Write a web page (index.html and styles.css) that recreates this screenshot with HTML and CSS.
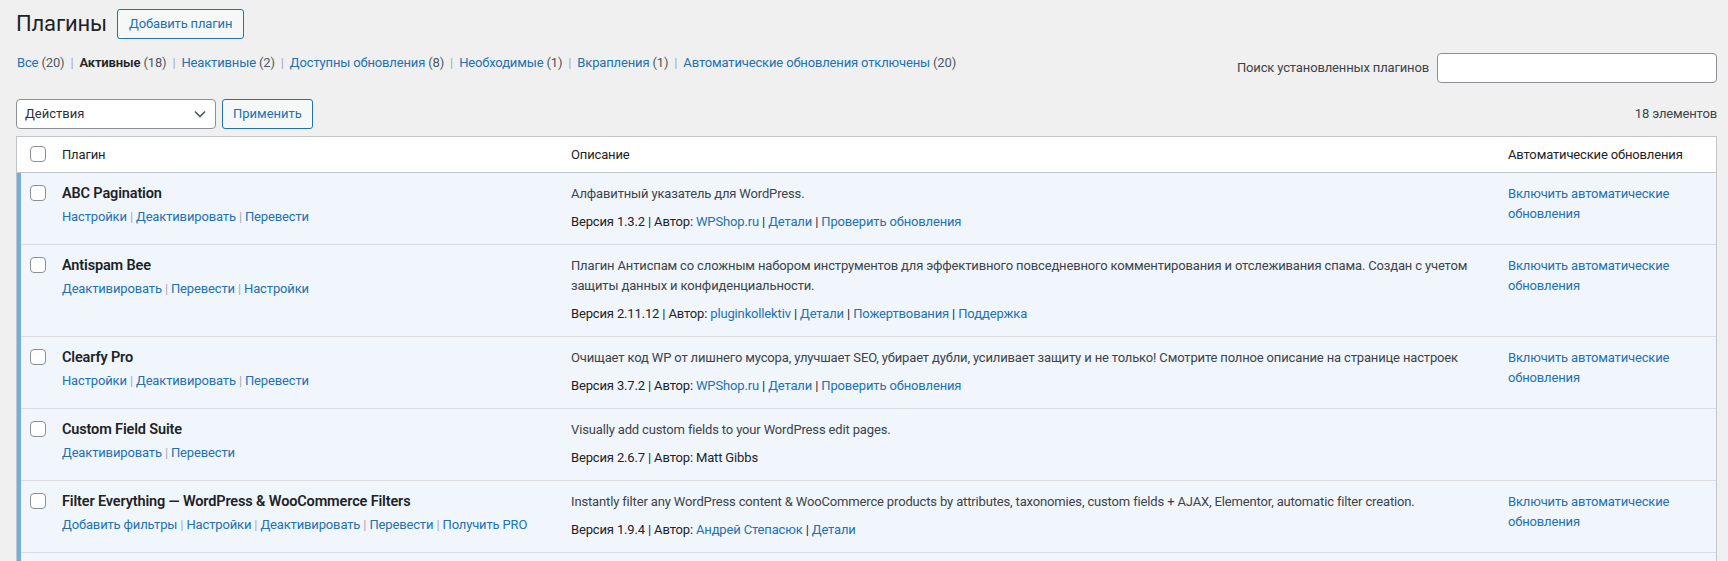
FILE: index.html
```html
<!DOCTYPE html>
<html lang="ru">

<head>
    <meta charset="UTF-8">
    <title>Плагины</title>
    <link rel="stylesheet" href="styles.css">
</head>

<body>
    <div class="wrap">
        <!-- page title -->
        <div class="title-row">
            <h1>Плагины</h1>
            <a href="#" class="page-title-action">Добавить плагин</a>
        </div>

        <!-- filters + search -->
        <div class="filter-row">
            <ul class="subsubsub">
                <li><a href="#">Все <span class="count">(20)</span></a><span class="sep">|</span></li>
                <li><a href="#" class="current">Активные <span class="count">(18)</span></a><span class="sep">|</span></li>
                <li><a href="#">Неактивные <span class="count">(2)</span></a><span class="sep">|</span></li>
                <li><a href="#">Доступны обновления <span class="count">(8)</span></a><span class="sep">|</span></li>
                <li><a href="#">Необходимые <span class="count">(1)</span></a><span class="sep">|</span></li>
                <li><a href="#">Вкрапления <span class="count">(1)</span></a><span class="sep">|</span></li>
                <li><a href="#">Автоматические обновления отключены <span class="count">(20)</span></a></li>
            </ul>
            <form class="search-box">
                <label for="plugin-search">Поиск установленных плагинов</label>
                <input type="search" id="plugin-search">
            </form>
        </div>

        <!-- bulk actions -->
        <div class="tablenav">
            <span class="select">
                <select>
                    <option>Действия</option>
                </select>
                <svg width="12" height="8" viewBox="0 0 12 8"><path d="M1 1.5 6 6.5 11 1.5" fill="none" stroke="#50575e" stroke-width="1.6"/></svg>
            </span>
            <button class="button">Применить</button>
            <span class="displaying-num">18 элементов</span>
        </div>

        <table class="plugins">
            <colgroup>
                <col class="col-check">
                <col class="col-name">
                <col class="col-desc">
                <col class="col-auto">
            </colgroup>
            <thead>
                <tr>
                    <th class="check-column"><input type="checkbox"></th>
                    <th>Плагин</th>
                    <th>Описание</th>
                    <th>Автоматические обновления</th>
                </tr>
            </thead>
            <tbody>
                <tr>
                    <th class="check-column"><input type="checkbox"></th>
                    <td>
                        <strong class="plugin-name">ABC Pagination</strong>
                        <div class="row-actions">
                            <a href="#">Настройки</a> <span class="sep">|</span> <a href="#">Деактивировать</a> <span class="sep">|</span> <a href="#">Перевести</a>
                        </div>
                    </td>
                    <td>
                        <p class="desc">Алфавитный указатель для WordPress.</p>
                        <div class="version">Версия 1.3.2 | Автор: <a href="#">WPShop.ru</a> | <a href="#">Детали</a> | <a href="#">Проверить обновления</a></div>
                    </td>
                    <td><a href="#">Включить автоматические обновления</a></td>
                </tr>
                <tr>
                    <th class="check-column"><input type="checkbox"></th>
                    <td>
                        <strong class="plugin-name">Antispam Bee</strong>
                        <div class="row-actions">
                            <a href="#">Деактивировать</a> <span class="sep">|</span> <a href="#">Перевести</a> <span class="sep">|</span> <a href="#">Настройки</a>
                        </div>
                    </td>
                    <td>
                        <p class="desc">Плагин Антиспам со сложным набором инструментов для эффективного повседневного комментирования и отслеживания спама. Создан с учетом защиты данных и конфиденциальности.</p>
                        <div class="version">Версия 2.11.12 | Автор: <a href="#">pluginkollektiv</a> | <a href="#">Детали</a> | <a href="#">Пожертвования</a> | <a href="#">Поддержка</a></div>
                    </td>
                    <td><a href="#">Включить автоматические обновления</a></td>
                </tr>
                <tr>
                    <th class="check-column"><input type="checkbox"></th>
                    <td>
                        <strong class="plugin-name">Clearfy Pro</strong>
                        <div class="row-actions">
                            <a href="#">Настройки</a> <span class="sep">|</span> <a href="#">Деактивировать</a> <span class="sep">|</span> <a href="#">Перевести</a>
                        </div>
                    </td>
                    <td>
                        <p class="desc">Очищает код WP от лишнего мусора, улучшает SEO, убирает дубли, усиливает защиту и не только! Смотрите полное описание на странице настроек</p>
                        <div class="version">Версия 3.7.2 | Автор: <a href="#">WPShop.ru</a> | <a href="#">Детали</a> | <a href="#">Проверить обновления</a></div>
                    </td>
                    <td><a href="#">Включить автоматические обновления</a></td>
                </tr>
                <tr>
                    <th class="check-column"><input type="checkbox"></th>
                    <td>
                        <strong class="plugin-name">Custom Field Suite</strong>
                        <div class="row-actions">
                            <a href="#">Деактивировать</a> <span class="sep">|</span> <a href="#">Перевести</a>
                        </div>
                    </td>
                    <td>
                        <p class="desc">Visually add custom fields to your WordPress edit pages.</p>
                        <div class="version">Версия 2.6.7 | Автор: Matt Gibbs</div>
                    </td>
                    <td></td>
                </tr>
                <tr>
                    <th class="check-column"><input type="checkbox"></th>
                    <td>
                        <strong class="plugin-name">Filter Everything — WordPress &amp; WooCommerce Filters</strong>
                        <div class="row-actions">
                            <a href="#">Добавить фильтры</a> <span class="sep">|</span> <a href="#">Настройки</a> <span class="sep">|</span> <a href="#">Деактивировать</a> <span class="sep">|</span> <a href="#">Перевести</a> <span class="sep">|</span> <a href="#">Получить PRO</a>
                        </div>
                    </td>
                    <td>
                        <p class="desc">Instantly filter any WordPress content &amp; WooCommerce products by attributes, taxonomies, custom fields + AJAX, Elementor, automatic filter creation.</p>
                        <div class="version">Версия 1.9.4 | Автор: <a href="#">Андрей Степасюк</a> | <a href="#">Детали</a></div>
                    </td>
                    <td><a href="#">Включить автоматические обновления</a></td>
                </tr>
                <tr>
                    <th class="check-column"><input type="checkbox"></th>
                    <td>
                        <strong class="plugin-name">Flamingo</strong>
                        <div class="row-actions">
                            <a href="#">Деактивировать</a> <span class="sep">|</span> <a href="#">Перевести</a>
                        </div>
                    </td>
                    <td>
                        <p class="desc">A trustworthy message storage plugin for Contact Form 7.</p>
                        <div class="version">Версия 2.5 | Автор: <a href="#">Takayuki Miyoshi</a> | <a href="#">Детали</a></div>
                    </td>
                    <td><a href="#">Включить автоматические обновления</a></td>
                </tr>
            </tbody>
        </table>
    </div>
</body>

</html>
```

FILE: styles.css
```css
body {
    margin: 0;
    background: #f0f0f1;
    color: #3c434a;
    font-family: -apple-system, BlinkMacSystemFont, "Segoe UI", Roboto, "Noto Sans", sans-serif;
    font-size: 13px;
    letter-spacing: -0.15px;
    line-height: 20px;
}

a {
    color: #2271b1;
    text-decoration: none;
}

.wrap {
    padding: 0 11px 0 16px;
}

/* title */
.title-row {
    display: flex;
    align-items: center;
    padding-top: 9px;
}

.title-row h1 {
    margin: 0 10px 0 0;
    font-size: 22px;
    font-weight: 400;
    line-height: 30px;
    color: #1d2327;
}

.page-title-action {
    display: inline-block;
    height: 30px;
    box-sizing: border-box;
    padding: 0 11px;
    line-height: 28px;
    border: 1px solid #2271b1;
    border-radius: 3px;
    background: #f6f7f7;
}

/* filters row */
.filter-row {
    display: flex;
    justify-content: space-between;
    align-items: flex-start;
    margin-top: 14px;
}

.subsubsub {
    display: flex;
    margin: 0;
    padding: 0 0 0 1px;
    list-style: none;
    color: #646970;
}

.subsubsub .count {
    color: #50575e;
}

.subsubsub .current {
    color: #1d2327;
    font-weight: 600;
}

.subsubsub .current .count {
    font-weight: 400;
}

.subsubsub .sep {
    margin: 0 6px;
    color: #a7aaad;
}

.search-box {
    display: flex;
    align-items: center;
    margin: 0;
}

.search-box label {
    margin-right: 8px;
    line-height: 30px;
}

.search-box input {
    width: 280px;
    height: 30px;
    box-sizing: border-box;
    margin: 0;
    border: 1px solid #8c8f94;
    border-radius: 4px;
    background: #fff;
    font: inherit;
}

/* bulk actions */
.tablenav {
    display: flex;
    align-items: center;
    gap: 6px;
    margin-top: 16px;
    height: 30px;
}

.select {
    display: inline-flex;
    align-items: center;
    width: 200px;
    height: 30px;
    box-sizing: border-box;
    padding: 0 9px 0 8px;
    border: 1px solid #8c8f94;
    border-radius: 4px;
    background: #fff;
}

.select select {
    flex: 1;
    appearance: none;
    -webkit-appearance: none;
    border: none;
    background: transparent;
    padding: 0;
    font: inherit;
    color: #2c3338;
    outline: none;
}

.button {
    height: 30px;
    padding: 0 10px;
    border: 1px solid #2271b1;
    border-radius: 3px;
    background: #f6f7f7;
    color: #2271b1;
    font: inherit;
}

.displaying-num {
    margin-left: auto;
    line-height: 30px;
}

/* table */
.plugins {
    width: 100%;
    margin-top: 7px;
    table-layout: fixed;
    border-collapse: separate;
    border-spacing: 0;
    border: 1px solid #c3c4c7;
    background: #fff;
}

.col-check {
    width: 35px;
}

.col-name {
    width: 509px;
}

.col-auto {
    width: 218px;
}

.plugins thead th {
    height: 35px;
    box-sizing: border-box;
    padding: 8px 10px 7px;
    border-bottom: 1px solid #c3c4c7;
    text-align: left;
    font-weight: 400;
    color: #1d2327;
}

.plugins th.check-column {
    padding: 12px 0 0 13px;
    vertical-align: top;
}

.plugins thead th.check-column {
    padding-top: 9px;
}

.plugins input[type="checkbox"] {
    appearance: none;
    -webkit-appearance: none;
    display: block;
    width: 16px;
    height: 16px;
    margin: 0;
    border: 1px solid #8c8f94;
    border-radius: 4px;
    background: #fff;
}

.plugins tbody td,
.plugins tbody th {
    background: #f0f6fc;
    box-shadow: inset 0 -1px 0 #dcdcde;
    vertical-align: top;
}

.plugins tbody td {
    padding: 11px 10px 13px;
}

.plugins tbody th.check-column {
    box-shadow: inset 4px 0 0 #72aee6, inset 0 -1px 0 #dcdcde;
}

.plugin-name {
    display: block;
    color: #1d2327;
    font-size: 14.5px;
    font-weight: 600;
    white-space: nowrap;
}

.row-actions {
    margin-top: 3px;
    white-space: nowrap;
}

.row-actions .sep {
    color: #a7aaad;
}

.desc {
    margin: 0 0 8px;
}

.version {
    color: #1d2327;
}
```
